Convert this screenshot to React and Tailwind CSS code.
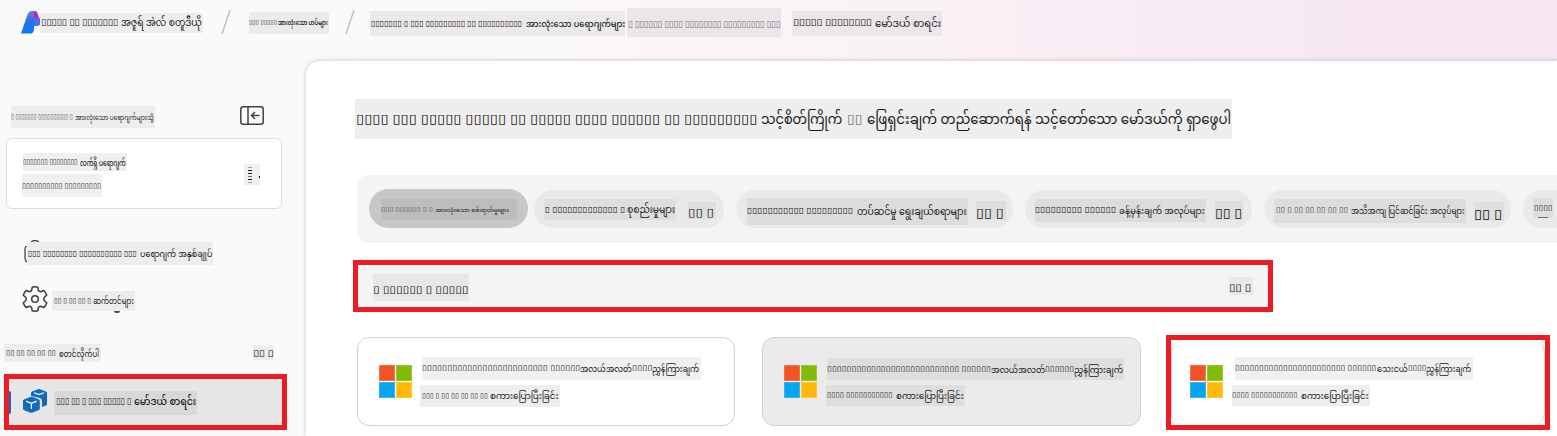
import { useLayoutEffect, useRef, useState } from "react";

/* Stretches one line of text to the width of its box. */
function Fit({ text, className = "" }) {
  const box = useRef(null);
  const line = useRef(null);
  const [scale, setScale] = useState(1);
  useLayoutEffect(() => {
    setScale(box.current.clientWidth / line.current.offsetWidth);
  }, [text]);
  return (
    <span ref={box} className={`flex shrink-0 items-center whitespace-nowrap leading-none ${className}`}>
      <span ref={line} className="inline-block origin-left" style={{ transform: `scaleX(${scale})` }}>
        {text}
      </span>
    </span>
  );
}

/* Burmese text sits slightly lower than the glyph boxes beside it. */
function Burmese({ text, className = "" }) {
  return <Fit text={text} className={`pt-[3px] ${className}`} />;
}

const tofu = (counts) => counts.map((n) => "▯".repeat(n)).join(" ");

function Label({ className, children }) {
  return <div className={`flex shrink-0 items-center ${className}`}>{children}</div>;
}

function Slash() {
  return (
    <svg className="mt-[10px] h-[24px] w-[10px] shrink-0" viewBox="0 0 10 24" fill="none" stroke="#b9b9b9" strokeWidth="1.3">
      <path d="M1 24 9 0" />
    </svg>
  );
}

function Logo() {
  return (
    <svg className="mt-[11px] h-[23px] w-[19px] shrink-0" viewBox="0 0 19 23">
      <defs>
        <linearGradient id="blue" x1="0" y1="0" x2="0" y2="1">
          <stop offset="0" stopColor="#7a79e0" />
          <stop offset=".45" stopColor="#2a6fe8" />
          <stop offset="1" stopColor="#087cf5" />
        </linearGradient>
      </defs>
      <path d="M11 0h3c2 0 3 3 4 7h-5z" fill="#b82b9b" />
      <path d="M12 7h7v7l-3 1h-4z" fill="#4b6fe8" />
      <path d="M11 0C8 0 7 2 6 5L0 22.5h9c3 0 4-2 4-5V3c0-2-.5-3-2-3z" fill="url(#blue)" />
    </svg>
  );
}

function Windows() {
  return (
    <div className="grid size-[33px] shrink-0 grid-cols-2 gap-[1px]">
      <div className="border border-[#f6704b] bg-[#f35325]" />
      <div className="border border-[#97c634] bg-[#81bc06]" />
      <div className="border border-[#35b4f3] bg-[#05a6f0]" />
      <div className="border border-[#ffc934] bg-[#ffba08]" />
    </div>
  );
}

function Gear() {
  return (
    <svg className="size-[26px] shrink-0" viewBox="0 0 26 26" fill="none" stroke="#3c3c3c" strokeWidth="1.5" strokeLinejoin="round">
      <path d="M10.2 1.2q2.8-.7 5.6 0l.6 3.4q1 .9 2.3 1.1l3.2-1.2q2 2 2.8 4.8l-2.6 2.2q-.6 1.5 0 3l2.6 2.2q-.8 2.8-2.8 4.8l-3.2-1.2q-1.3.2-2.3 1.1l-.6 3.4q-2.8.7-5.6 0l-.6-3.4q-1-.9-2.3-1.1l-3.2 1.2q-2-2-2.8-4.8l2.6-2.2q.6-1.5 0-3L1.3 9.3q.8-2.8 2.8-4.8l3.2 1.2q1.3-.2 2.3-1.1z" />
      <circle cx="13" cy="13" r="3.3" />
    </svg>
  );
}

function Collapse() {
  return (
    <svg className="h-[19px] w-[24px] shrink-0" viewBox="0 0 24 19" fill="none" stroke="#424242" strokeWidth="1.5">
      <rect x=".8" y=".8" width="22.4" height="17.4" rx="2.5" />
      <path d="M8 1v17M19.500 9.500h-8M15 6l-3.500 3.500L15 13" />
    </svg>
  );
}

function Cubes() {
  return (
    <svg className="size-[24px] shrink-0" viewBox="0 0 24 24" fill="#0f6cbd">
      <path d="M8 7V4q0-1 1-1.500L15 .2q1-.4 2 0l6 2.300q1 .5 1 1.500v11q0 1-1 1.500L19 18v-6q0-2-2-3z" />
      <path d="M0 12q0-1.300 1.200-1.800l6-2.200q1.200-.4 2.400 0l6 2.200q1.200.5 1.200 1.800v7.500q0 1.300-1.200 1.800l-6 2.300q-1.200.4-2.400 0l-6-2.300Q0 20.800 0 19.500z" />
      <path d="m3.500 12.300 4.900 2 4.900-2M8.400 14.300v5M11.500 4l4.500 1.600L20.500 4" fill="none" stroke="#fff" strokeWidth="1.300" strokeLinecap="round" />
    </svg>
  );
}

function Header() {
  return (
    <header className="flex h-[61px] items-start pl-[21px]">
      <Logo />
      <Label className="mt-[13px] h-[20px] w-[163px] bg-[#ededed]">
        <Fit text={tofu([5, 2, 7])} className="ml-[1px] w-[77px] text-[9px]" />
        <Burmese text="အဇူရ် အဲလ် စတူဒီယို" className="ml-[3px] w-[81px] text-[10.5px]" />
      </Label>
      <div className="w-[18px]" />
      <Slash />
      <Label className="ml-[18px] mt-[12px] h-[22px] w-[80px] bg-[#ebecea]">
        <Fit text={tofu([3, 5])} className="w-[28px] text-[6px]" />
        <Burmese text="အားလုံးသော ဟပ်များ" className="ml-[1px] w-[50px] text-[6.5px] font-semibold" />
      </Label>
      <div className="w-[16px]" />
      <Slash />
      <Label className="ml-[15px] mt-[11px] h-[25px] w-[255px] bg-[#ebe9ea]">
        <Fit text={tofu([7, 1, 3, 9, 2, 10])} className="ml-[1px] w-[151px] text-[8px]" />
        <Burmese text="အားလုံးသော ပရောဂျက်များ" className="ml-[4px] w-[99px] text-[9.5px] font-medium" />
      </Label>
      <Label className="ml-[2px] mt-[8px] h-[29px] w-[154px] bg-[#eae6ea]">
        <Fit text={tofu([1, 6, 4, 8, 9, 3])} className="ml-[1px] mt-[5px] w-[152px] text-[9px] text-neutral-500" />
      </Label>
      <Label className="ml-[11px] mt-[11px] h-[25px] w-[150px] bg-[#ece7eb]">
        <Fit text={tofu([5, 8])} className="ml-[1px] w-[79px] text-[9px]" />
        <Burmese text="မော်ဒယ် စာရင်း" className="ml-[3px] w-[66px] text-[10.5px]" />
      </Label>
    </header>
  );
}

function Sidebar() {
  return (
    <aside className="w-[306px] shrink-0">
      <div className="flex h-[77px] items-start pt-[44px]">
        <Label className="ml-[11px] mt-[1px] h-[22px] w-[144px] bg-[#ededed]">
          <Fit text={tofu([1, 7, 10, 1])} className="w-[62px] text-[7px] text-neutral-600" />
          <Burmese text="အားလုံးသော ပရောဂျက်များသို့" className="ml-[2px] w-[79px] text-[7.5px]" />
        </Label>
        <div className="ml-[85px] mt-px"><Collapse /></div>
      </div>
      <div className="ml-[6px] flex h-[71px] w-[276px] items-start rounded-[6px] border border-[#dedede] bg-white">
        <div className="w-[237px] pl-[15px] pt-[14px]">
          <Label className="ml-[1px] h-[18px] w-[104px] bg-[#efefef]">
            <Fit text={tofu([7, 8])} className="w-[55px] text-[7px]" />
            <Burmese text="လက်ရှိ ပရောဂျက်" className="ml-[2px] w-[46px] text-[8px] font-medium" />
          </Label>
          <Label className="mt-[3px] h-[23px] w-[80px] bg-[#f0f0f0]">
            <Fit text={tofu([10, 9])} className="mt-[2px] w-[79px] text-[7px]" />
          </Label>
        </div>
        <Label className="mt-[25px] h-[21px] w-[16px] bg-[#efefef]">
          <div className="ml-[4px] flex w-[4px] flex-col gap-[2px]">
            <div className="h-px bg-neutral-400" />
            <div className="h-px bg-neutral-900" />
            <div className="h-px bg-neutral-800" />
            <div className="h-px bg-neutral-500" />
            <div className="h-px bg-neutral-900" />
            <div className="h-px bg-neutral-400" />
          </div>
          <div className="ml-[7px] mt-[5px] h-[2px] w-[1px] bg-black" />
        </Label>
      </div>
      <div className="mt-[31px] flex h-[25px] items-start pl-[24px]">
        <svg className="h-[25px] w-[16px] shrink-0" viewBox="0 0 16 25" fill="none" stroke="#444" strokeWidth="1.3">
          <path d="M3 22Q1 21 1 18V9q0-2 1.500-3M7 2q4-3 8 0" />
        </svg>
        <Label className="-ml-[13px] mt-[2px] h-[23px] w-[186px] bg-[#ededed]">
          <Fit text={tofu([3, 8, 10, 3])} className="ml-[1px] w-[109px] text-[8px]" />
          <Burmese text="ပရောဂျက် အနှစ်ချုပ်" className="ml-[3px] w-[72px] text-[9.5px]" />
        </Label>
      </div>
      <div className="mt-[21px] flex h-[25px] items-start pl-[22px]">
        <Gear />
        <Label className="ml-[4px] mt-[5px] h-[20px] w-[83px] bg-[#ededed]">
          <Fit text={tofu([2, 1, 2, 2, 1])} className="ml-[2px] w-[37px] text-[7px]" />
          <Burmese text="ဆက်တင်များ" className="ml-[2px] w-[41px] text-[8.5px]" />
        </Label>
      </div>
      <div className="ml-[114px] h-[2px] w-[6px] rounded-b bg-[#35517c]" />
      <div className="mt-[31px] flex h-[30px] items-start">
        <Label className="ml-[4px] h-[18px] w-[97px] bg-[#ededed]">
          <Fit text={tofu([2, 2, 2, 2, 2])} className="ml-[2px] w-[50px] text-[7px]" />
          <Burmese text="စတင်လိုက်ပါ" className="ml-[3px] w-[40px] text-[8px]" />
        </Label>
        <Label className="ml-[152px] mt-px h-[15px] w-[21px] bg-[#ededed]">
          <Fit text="▯▯ ▯" className="mt-[4px] w-[20px] text-[9px]" />
        </Label>
      </div>
      <div className="ml-[4px] flex h-[56px] w-[283px] items-center border-[5px] border-[#ed1c24] bg-[#e6e6e6]">
        <div className="h-[23px] w-[2px] rounded-r-[2px] bg-[#0f6cbd]" />
        <div className="-mt-[2px] ml-[12px]"><Cubes /></div>
        <Label className="ml-[7px] mt-[1px] h-[24px] w-[143px] bg-[#d8d8d8]">
          <Fit text={tofu([3, 2, 1, 3, 5, 1])} className="-mt-px ml-[2px] w-[75px] text-[9px]" />
          <Burmese text="မော်ဒယ် စာရင်း" className="-mt-px ml-[3px] w-[62px] text-[10.5px] font-medium" />
        </Label>
      </div>
    </aside>
  );
}

function Filters() {
  const count = "▯▯ ▯";
  return (
    <div className="flex h-[68px] w-[1200px] shrink-0 items-start overflow-hidden rounded-l-[12px] bg-[#f4f4f4] pl-[12px] pt-[14px]">
      <div className="flex h-[39px] w-[159px] shrink-0 items-center rounded-full bg-[#c7c7c7] pl-[12px]">
        <Label className="mt-[2px] h-[21px] w-[136px] bg-[#bdbdbd]">
          <Fit text={tofu([3, 6, 1, 1])} className="w-[52px] text-[6px] text-neutral-600" />
          <Burmese text="အားလုံးသော စစ်ထုတ်မှုများ" className="ml-[2px] w-[74px] text-[6px]" />
        </Label>
      </div>
      <div className="ml-[6px] mt-px flex h-[38px] w-[190px] shrink-0 items-center rounded-full bg-[#e9e9e9] pl-[10px]">
        <Label className="mt-px h-[21px] w-[132px] bg-[#dedede]">
          <Fit text={tofu([1, 13, 1])} className="ml-[1px] w-[80px] text-[8px]" />
          <Burmese text="စုစည်းမှုများ" className="ml-[2px] w-[48px] text-[10px]" />
        </Label>
        <Label className="ml-[12px] mt-[3px] h-[17px] w-[28px] bg-[#dfdfdf]">
          <Fit text={count} className="mt-[6px] w-[26px] text-[11px]" />
        </Label>
      </div>
      <div className="ml-[12px] mt-px flex h-[38px] w-[277px] shrink-0 items-center rounded-full bg-[#e9e9e9] pl-[11px]">
        <Label className="mt-[5px] h-[27px] w-[221px] bg-[#dcdcdc]">
          <Fit text={tofu([11, 9])} className="-mt-[1px] w-[106px] text-[8px]" />
          <Burmese text="တပ်ဆင်မှု ရွေးချယ်စရာများ" className="-mt-[1px] ml-[4px] w-[110px] text-[10px]" />
        </Label>
        <Label className="ml-[8px] mt-[3px] h-[19px] w-[30px] bg-[#dddddd]">
          <Fit text={count} className="mt-[8px] w-[28px] text-[13px]" />
        </Label>
      </div>
      <div className="ml-[12px] mt-px flex h-[38px] w-[227px] shrink-0 items-center rounded-full bg-[#e9e9e9] pl-[10px]">
        <Label className="mt-[2px] h-[23px] w-[171px] bg-[#dcdcdc]">
          <Fit text={tofu([9, 6])} className="w-[81px] text-[8px]" />
          <Burmese text="ခန့်မှန်းချက် အလုပ်များ" className="ml-[3px] w-[86px] text-[9.5px]" />
        </Label>
        <Label className="ml-[9px] mt-[3px] h-[19px] w-[28px] bg-[#dddddd]">
          <Fit text={count} className="mt-[7px] w-[27px] text-[12px]" />
        </Label>
      </div>
      <div className="ml-[12px] mt-px flex h-[38px] w-[247px] shrink-0 items-center rounded-full bg-[#e9e9e9] pl-[10px]">
        <Label className="mt-[4px] h-[24px] w-[192px] bg-[#dddddd]">
          <Fit text={tofu([2, 1, 2, 2, 2, 2, 2])} className="-mt-[2px] ml-[2px] w-[72px] text-[7px] text-neutral-700" />
          <Burmese text="အသိအကျ ပြင်ဆင်ခြင်း အလုပ်များ" className="ml-[3px] w-[114px] text-[8.5px]" />
        </Label>
        <Label className="ml-[8px] mt-[4px] h-[19px] w-[30px] bg-[#dfdfdf]">
          <Fit text={count} className="mt-[8px] w-[28px] text-[12px]" />
        </Label>
      </div>
      <div className="ml-[12px] mt-px flex h-[38px] w-[100px] shrink-0 items-center rounded-full bg-[#e9e9e9] pl-[10px]">
        <div className="-mt-[3px] flex h-[20px] w-[20px] flex-col items-center bg-[#dddddd]">
          <Fit text="▯▯▯▯" className="mt-[7px] w-[18px] text-[7px]" />
          <div className="mt-[5px] h-px w-[10px] shrink-0 bg-neutral-500" />
        </div>
      </div>
    </div>
  );
}

function Main() {
  return (
    <main className="flex h-[375px] flex-1 flex-col overflow-hidden rounded-tl-[14px] bg-white pl-[47px] pt-[38px] shadow-[0_0_5px_rgba(0,0,0,0.22)]">
      <Label className="ml-[2px] h-[40px] w-[877px] bg-[#eeeeee]">
        <Fit text={tofu([4, 3, 5, 5, 2, 5, 4, 6, 2, 9])} className="ml-[1px] mt-[3px] w-[401px] text-[13px]" />
        <Burmese text="သင့်စိတ်ကြိုက်" className="ml-[4px] w-[81px] text-[14px]" />
        <Fit text="▯▯" className="ml-[5px] mt-[3px] w-[15px] text-[13px] text-neutral-500" />
        <Burmese text="ဖြေရှင်းချက် တည်ဆောက်ရန် သင့်တော်သော မော်ဒယ်ကို ရှာဖွေပါ" className="ml-[5px] w-[364px] text-[14px]" />
      </Label>
      <div className="ml-[4px] mt-[36px]"><Filters /></div>
      <div className="mt-[17px] flex h-[52px] w-[920px] shrink-0 items-center border-[5px] border-[#ed1c24] bg-[#f4f4f4] pl-[15px]">
        <Label className="mt-[3px] h-[27px] w-[96px] bg-[#e7e7e7]">
          <Fit text={tofu([1, 6, 1, 5])} className="mt-[6px] w-[95px] text-[10px]" />
        </Label>
        <Label className="ml-[760px] h-[18px] w-[24px] bg-[#e8e8e8]">
          <Fit text="▯▯ ▯" className="mt-[6px] w-[22px] text-[10px]" />
        </Label>
      </div>
      <div className="flex items-start">
        <div className="ml-[4px] mt-[25px] flex h-[89px] w-[378px] shrink-0 items-start rounded-[12px] border border-[#d1d1d1] bg-white pl-[21px]">
          <div className="mt-[27px]"><Windows /></div>
          <div className="pt-[19px]">
            <Label className="ml-[10px] h-[23px] w-[279px] bg-[#f0f0f0]">
              <Fit text={tofu([25, 6])} className="w-[158px] text-[7px]" />
              <Burmese text="အလယ်အလတ်" className="w-[52px] text-[9px]" />
              <Fit text="▯▯▯▯" className="w-[20px] text-[7px]" />
              <Burmese text="ညွှန်ကြားချက်" className="w-[47px] text-[9px]" />
            </Label>
            <Label className="ml-[8px] mt-[5px] h-[22px] w-[140px] bg-[#eeeeee]">
              <Fit text={tofu([3, 1, 2, 2, 2, 2, 2])} className="ml-[2px] w-[66px] text-[7px]" />
              <Burmese text="စကားပြောပြီးခြင်း" className="ml-[2px] w-[69px] text-[8.5px]" />
            </Label>
          </div>
        </div>
        <div className="ml-[27px] mt-[25px] flex h-[89px] w-[379px] shrink-0 items-start rounded-[12px] border border-[#d1d1d1] bg-[#ebebeb] pl-[21px]">
          <div className="mt-[27px]"><Windows /></div>
          <div className="pt-[20px]">
            <Label className="ml-[10px] h-[22px] w-[297px] bg-[#dedede]">
              <Fit text={tofu([27, 6])} className="w-[164px] text-[7px]" />
              <Burmese text="အလယ်အလတ်" className="w-[54px] text-[9.5px]" />
              <Fit text="▯▯▯▯▯▯" className="w-[29px] text-[7px]" />
              <Burmese text="ညွှန်ကြားချက်" className="w-[49px] text-[9.5px]" />
            </Label>
            <Label className="ml-[9px] mt-[5px] h-[21px] w-[139px] bg-[#dedede]">
              <Fit text={tofu([4, 11])} className="ml-[1px] w-[66px] text-[7px]" />
              <Burmese text="စကားပြောပြီးခြင်း" className="ml-[3px] w-[68px] text-[8.5px]" />
            </Label>
          </div>
        </div>
        <div className="ml-[25px] mt-[23px] h-[95px] w-[384px] shrink-0 border-[5px] border-[#ed1c24] bg-white">
          <div className="flex h-[85px] items-start rounded-[12px] border-x border-[#d1d1d1] pl-[18px]">
            <div className="mt-[25px]"><Windows /></div>
            <div className="pt-[17px]">
              <Label className="ml-[12px] h-[23px] w-[238px] bg-[#f0f0f0]">
                <Fit text={tofu([23, 6])} className="w-[142px] text-[7px]" />
                <Burmese text="သေးငယ်" className="w-[31px] text-[9px]" />
                <Fit text="▯▯▯▯" className="w-[18px] text-[7px]" />
                <Burmese text="ညွှန်ကြားချက်" className="w-[45px] text-[9px]" />
              </Label>
              <Label className="ml-[9px] mt-[5px] h-[21px] w-[138px] bg-[#eeeeee]">
                <Fit text={tofu([4, 11])} className="w-[66px] text-[7px]" />
                <Burmese text="စကားပြောပြီးခြင်း" className="ml-[3px] w-[68px] text-[8.5px]" />
              </Label>
            </div>
          </div>
        </div>
      </div>
    </main>
  );
}

export default function App() {
  return (
    <div className="h-[436px] w-[1557px] overflow-hidden bg-[linear-gradient(90deg,#fafafa_0%,#fafafa_20%,#faf6f9_40%,#faf1f6_60%,#f8eaf3_78%,#f5e6f0_100%)] font-['Noto_Sans_Myanmar','Noto_Sans','DejaVu_Sans',sans-serif] text-neutral-900">
      <Header />
      <div className="flex">
        <Sidebar />
        <Main />
      </div>
    </div>
  );
}
